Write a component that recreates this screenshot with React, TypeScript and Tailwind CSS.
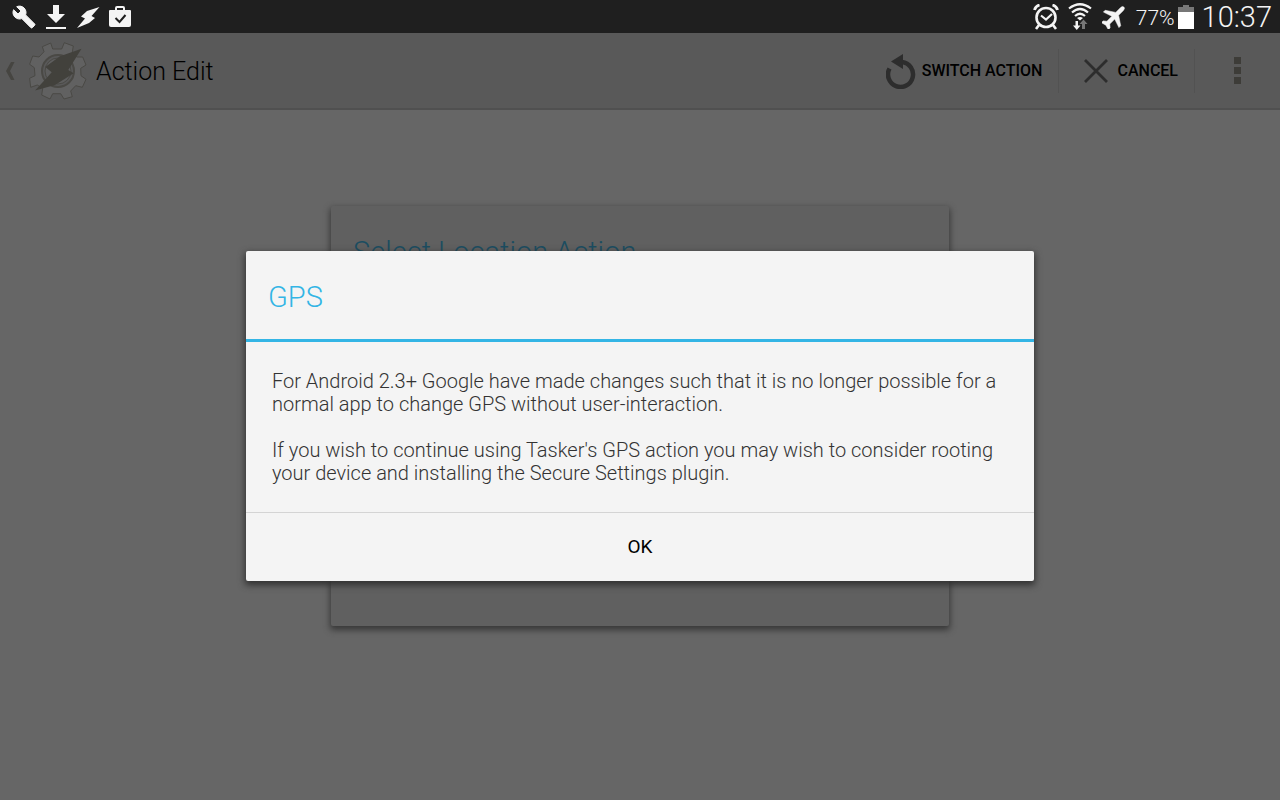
type IconProps = { className?: string };

function WrenchIcon({ className }: IconProps) {
    return (
        <svg viewBox="0 0 24 24" className={className} fill="currentColor" aria-hidden="true">
            <path d="M22.7 19l-9.1-9.1c.9-2.3.4-5-1.5-6.9-2-2-5-2.4-7.4-1.3L9 6 6 9 1.6 4.7C.4 7.1.9 10.1 2.9 12.1c1.9 1.9 4.6 2.4 6.9 1.5l9.1 9.1c.4.4 1 .4 1.4 0l2.3-2.3c.5-.4.5-1.1.1-1.4z" stroke="currentColor" />
        </svg>
    );
}

function DownloadIcon({ className }: IconProps) {
    return (
        <svg viewBox="0 0 24 24" className={className} fill="currentColor" aria-hidden="true">
            <path d="M9 0h6v9h6l-9 9-9-9h6zM2 22h20v2H2z" />
        </svg>
    );
}

function BoltIcon({ className }: IconProps) {
    return (
        <svg viewBox="0 0 24 24" className={className} fill="currentColor" aria-hidden="true">
            <path d="M23.5 2L11 6 5 11.5l4 2L1 23l12-5 6-5-3.5-2z" />
        </svg>
    );
}

function BagIcon({ className }: IconProps) {
    return (
        <svg viewBox="0 0 24 24" className={className} aria-hidden="true">
            <path d="M8 6V3q0-1 1-1h6q1 0 1 1v3" fill="none" stroke="currentColor" strokeWidth="2" />
            <path d="M1 6q0-1 1-1h20q1 0 1 1v14q0 2-2 2H3q-2 0-2-2z" fill="currentColor" />
            <path d="M7.5 13l4 4 6-7" fill="none" stroke="#1f1f1f" strokeWidth="2" />
        </svg>
    );
}

function AlarmIcon({ className }: IconProps) {
    return (
        <svg viewBox="0 0 26 26" className={className} fill="none" stroke="currentColor" aria-hidden="true">
            <circle cx="13" cy="13.5" r="9.5" strokeWidth="2.6" />
            <path d="M8 11.5l5 4 6-5.5" strokeWidth="2.2" />
            <path d="M1.5 6q1-4 5-5M24.5 6q-1-4-5-5" strokeWidth="2.8" />
            <path d="M6 21l-3 4M20 21l3 4" strokeWidth="2.6" />
        </svg>
    );
}

function WifiIcon({ className }: IconProps) {
    return (
        <svg viewBox="0 0 24 28" className={className} aria-hidden="true">
            <g fill="none" stroke="currentColor" strokeWidth="2.2">
                <path d="M1 5.5q11-8.500 22 0" />
                <path d="M4 9.500q8-7 16 0" />
                <path d="M7 13q5-4.500 10 0" />
            </g>
            <path d="M9 15q3-2 6 0l-3 2.500z" fill="currentColor" />
            <path d="M7.500 18h2.500v4.500h2.500L8.800 27 5 22.500h2.500z" fill="currentColor" />
            <path d="M14 26h3v-5h2.500l-4-4.500-4 4.500H14z" fill="#777" />
        </svg>
    );
}

function PlaneIcon({ className }: IconProps) {
    return (
        <svg viewBox="0 0 24 24" className={className} fill="currentColor" aria-hidden="true">
            <path
                transform="rotate(45 12 12)"
                d="M23 16v-2.5l-9-6V1q0-3-2-3t-2 3v6.5l-9 6V16l9-3v7l-3 2.5V25l5-1.500 5 1.500v-2.500L14 20v-7z"
                stroke="currentColor"
                strokeWidth="0.5"
            />
        </svg>
    );
}

function BatteryIcon({ className }: IconProps) {
    return (
        <svg viewBox="0 0 16 24" className={className} aria-hidden="true">
            <path d="M5 0h6v2h5v5H0V2h5z" fill="#777" />
            <path d="M0 7h16v17H0z" fill="#fff" />
        </svg>
    );
}

function BackIcon({ className }: IconProps) {
    return (
        <svg viewBox="0 0 10 20" className={className} fill="currentColor" aria-hidden="true">
            <path d="M6 1h3.5L5 10l4.500 9H6L1 10z" />
        </svg>
    );
}

function TaskerIcon({ className }: IconProps) {
    return (
        <svg viewBox="0 0 58 58" className={className} aria-hidden="true">
            <path
                d="M13.3 4.700L21.700 1l2 6h9l2.600-6.300 9 3.300-1 6.300 4.400 4.700h6l3.300 8-5.300 3.300.3 7.400 5 3.600-3.700 8-6.600-1.600-5 5.300 1.600 5.700L35 57l-3.300-5.300h-8L21 57l-8.300-4 1-6.700L8.300 43l-6.600 2.300L.6 36.300 6 33.700l-.7-8-4.700-3.400L3.700 14l6.300 1 5-5.300z"
                fill="#616161"
                stroke="#4a4945"
                strokeWidth="1"
            />
            <circle cx="29" cy="29" r="16" fill="#595959" stroke="#4a4945" strokeWidth="2" />
            <circle cx="29" cy="29" r="13" fill="#5e5e5e" stroke="#4a4945" strokeWidth="1" />
            <path d="M52.5 6.700L31 14.300 16.300 25l6.400 5.300-4.400 5L6 48.500 26 43l18.700-11.700-5.400-3.300z" fill="#42413c" />
        </svg>
    );
}

function SwitchIcon({ className }: IconProps) {
    return (
        <svg viewBox="0 0 30 36" className={className} aria-hidden="true">
            <path d="M3.5 15.500A12.500 12.500 0 1 0 16 9" fill="none" stroke="currentColor" strokeWidth="4.500" />
            <path d="M5 8.500L17 1v15z" fill="currentColor" />
        </svg>
    );
}

function CloseIcon({ className }: IconProps) {
    return (
        <svg viewBox="0 0 24 24" className={className} aria-hidden="true">
            <path d="M1 1l22 22M23 1L1 23" stroke="currentColor" strokeWidth="2.8" />
        </svg>
    );
}

function MoreIcon({ className }: IconProps) {
    return (
        <svg viewBox="0 0 7 27" className={className} fill="currentColor" aria-hidden="true">
            <path d="M0 0h7v7H0zM0 10h7v7H0zM0 20h7v7H0z" />
        </svg>
    );
}

function StatusBar() {
    return (
        <div className="flex h-[33px] items-center justify-between bg-[#1f1f1f] pr-2 pl-3 text-[#f4f4f4]">
            <div className="flex items-center gap-2">
                <WrenchIcon className="size-6" />
                <DownloadIcon className="size-6" />
                <BoltIcon className="size-6" />
                <BagIcon className="size-6" />
            </div>
            <div className="flex items-center">
                <AlarmIcon className="mr-[9px] size-[26px]" />
                <WifiIcon className="mr-[10px] h-7 w-6" />
                <PlaneIcon className="mr-[10px] size-6" />
                <span className="mr-[3px] pt-[2px] text-[21px] leading-6 font-[350]">77%</span>
                <BatteryIcon className="mr-2 h-6 w-4" />
                <span className="text-[29px] leading-8 font-[350]">10:37</span>
            </div>
        </div>
    );
}

function ActionBar() {
    return (
        <header className="flex h-[77px] items-center justify-between border-b-2 border-[#505050] bg-[#595959] text-black">
            <div className="flex items-center">
                <button type="button" aria-label="Back" className="flex items-center pl-[5px] text-[#464541]">
                    <BackIcon className="h-5 w-[10px]" />
                    <TaskerIcon className="ml-[14px] size-[58px]" />
                </button>
                <h1 className="ml-[9px] pt-[2px] text-[25px] leading-8 font-[350]">Action Edit</h1>
            </div>
            <div className="flex items-center">
                <button
                    type="button"
                    className="flex h-11 items-center gap-[6px] border-r border-[#525252] pr-4 text-base font-medium"
                >
                    <SwitchIcon className="h-9 w-[30px] text-[#2d2d2d]" />
                    SWITCH ACTION
                </button>
                <button
                    type="button"
                    className="flex h-11 items-center gap-[9px] border-r border-[#525252] pr-4 pl-[25px] text-base font-medium"
                >
                    <CloseIcon className="size-6 text-[#2d2d2d]" />
                    CANCEL
                </button>
                <button type="button" aria-label="More options" className="flex h-11 items-center px-[39px] text-[#3d3c38]">
                    <MoreIcon className="h-[27px] w-[7px]" />
                </button>
            </div>
        </header>
    );
}

function SelectDialog() {
    return (
        <section className="col-start-1 row-start-1 h-[420px] w-full max-w-[618px] rounded-xs bg-[#606060] px-[22px] pt-7 shadow-[0_3px_6px_1px_#383838]">
            <h2 className="text-[29px] leading-9 font-[350] text-[#1b4d61]">Select Location Action</h2>
        </section>
    );
}

function GpsDialog() {
    return (
        <section
            role="dialog"
            aria-labelledby="gps-title"
            className="z-10 col-start-1 row-start-1 w-full max-w-[788px] rounded-xs bg-[#f4f4f4] shadow-[0_3px_7px_1px_#303030]"
        >
            <h2
                id="gps-title"
                className="border-b-3 border-[#33b5e5] px-[22px] pt-7 pb-6 text-[29px] leading-9 font-[350] text-[#33b5e5]"
            >
                GPS
            </h2>
            <div className="space-y-[23px] px-[26px] pt-7 pb-[27px] text-[20px] leading-[23px] font-[350] text-[#333]">
                <p>
                    For Android 2.3+ Google have made changes such that it is no longer possible for a
                    normal app to change GPS without user-interaction.
                </p>
                <p>
                    If you wish to continue using Tasker's GPS action you may wish to consider rooting
                    your device and installing the Secure Settings plugin.
                </p>
            </div>
            <button type="button" className="h-[69px] w-full border-t border-[#d4d4d4] text-[19px] text-black">
                OK
            </button>
        </section>
    );
}

export default function App() {
    return (
        <div className="relative flex min-h-screen flex-col bg-[#666] font-[Roboto,sans-serif]">
            <StatusBar />
            <ActionBar />
            <main className="absolute inset-x-0 top-8 bottom-0 grid place-items-center">
                <SelectDialog />
                <GpsDialog />
            </main>
        </div>
    );
}
